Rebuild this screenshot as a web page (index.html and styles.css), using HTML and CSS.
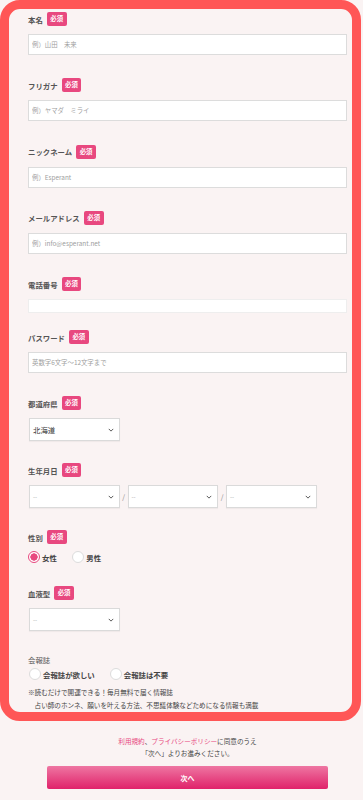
FILE: index.html
```html
<!DOCTYPE html>
<html lang="ja">
<head>
    <meta charset="UTF-8" />
    <meta name="viewport" content="width=device-width, initial-scale=1.0"/>
    <title>会員登録</title>
    <link rel="stylesheet" href="styles.css">
</head>
<body>
    <div class="form-frame">
        <form class="entry-form">
            <!-- 本名 -->
            <div class="field">
                <div class="field-label">本名<span class="badge">必須</span></div>
                <input class="text-input" type="text" placeholder="例）山田　未来" />
            </div>

            <!-- フリガナ -->
            <div class="field">
                <div class="field-label">フリガナ<span class="badge">必須</span></div>
                <input class="text-input" type="text" placeholder="例）ヤマダ　ミライ" />
            </div>

            <!-- ニックネーム -->
            <div class="field">
                <div class="field-label">ニックネーム<span class="badge">必須</span></div>
                <input class="text-input" type="text" placeholder="例）Esperant" />
            </div>

            <!-- メールアドレス -->
            <div class="field">
                <div class="field-label">メールアドレス<span class="badge">必須</span></div>
                <input class="text-input" type="email" placeholder="例）info@esperant.net" />
            </div>

            <!-- 電話番号 -->
            <div class="field field-tel">
                <div class="field-label">電話番号<span class="badge">必須</span></div>
                <input class="text-input tel-input" type="tel" />
            </div>

            <!-- パスワード -->
            <div class="field">
                <div class="field-label">パスワード<span class="badge">必須</span></div>
                <input class="text-input" type="password" placeholder="英数字6文字～12文字まで" />
            </div>

            <!-- 都道府県 -->
            <div class="field field-select">
                <div class="field-label">都道府県<span class="badge">必須</span></div>
                <div class="select-box">
                    <span class="select-value">北海道</span>
                    <svg class="chevron" viewBox="0 0 8 5"><path d="M1 1l3 3 3-3" /></svg>
                </div>
            </div>

            <!-- 生年月日 -->
            <div class="field field-select">
                <div class="field-label">生年月日<span class="badge">必須</span></div>
                <div class="birth-row">
                    <div class="select-box">
                        <span class="select-value empty">--</span>
                        <svg class="chevron" viewBox="0 0 8 5"><path d="M1 1l3 3 3-3" /></svg>
                    </div>
                    <span class="slash">/</span>
                    <div class="select-box">
                        <span class="select-value empty">--</span>
                        <svg class="chevron" viewBox="0 0 8 5"><path d="M1 1l3 3 3-3" /></svg>
                    </div>
                    <span class="slash">/</span>
                    <div class="select-box">
                        <span class="select-value empty">--</span>
                        <svg class="chevron" viewBox="0 0 8 5"><path d="M1 1l3 3 3-3" /></svg>
                    </div>
                </div>
            </div>

            <!-- 性別 -->
            <div class="field field-radio">
                <div class="field-label">性別<span class="badge">必須</span></div>
                <div class="radio-row">
                    <label class="radio"><span class="radio-mark checked"></span>女性</label>
                    <label class="radio"><span class="radio-mark"></span>男性</label>
                </div>
            </div>

            <!-- 血液型 -->
            <div class="field field-blood">
                <div class="field-label">血液型<span class="badge">必須</span></div>
                <div class="select-box">
                    <span class="select-value empty">--</span>
                    <svg class="chevron" viewBox="0 0 8 5"><path d="M1 1l3 3 3-3" /></svg>
                </div>
            </div>

            <!-- 会報誌 -->
            <div class="field field-magazine">
                <div class="field-label plain">会報誌</div>
                <div class="radio-row">
                    <label class="radio"><span class="radio-mark"></span>会報誌が欲しい</label>
                    <label class="radio"><span class="radio-mark"></span>会報誌は不要</label>
                </div>
                <p class="note">※読むだけで開運できる！毎月無料で届く情報誌<br>　占い師のホンネ、願いを叶える方法、不思議体験などためになる情報も満載</p>
            </div>
        </form>
    </div>

    <div class="agree">
        <p class="agree-text"><a href="#">利用規約</a>、<a href="#">プライバシーポリシー</a>に同意のうえ<br>「次へ」よりお進みください。</p>
        <button class="next-button" type="button">次へ</button>
    </div>
</body>
</html>
```

FILE: styles.css
```css
body {
    margin: 0;
    padding: 0;
    font-family: "Noto Sans CJK JP", "Noto Sans", sans-serif;
    background-color: #faf3f3;
    color: #555;
}

.form-frame {
    width: 361px;
    box-sizing: border-box;
    border: 9px solid #ff5656;
    border-radius: 20px;
    background-color: #faf3f3;
}

.entry-form {
    padding: 3px 5px 1px 19px;
}

.field {
    margin-bottom: 23.3px;
}

.field-label {
    display: flex;
    align-items: center;
    gap: 4px;
    height: 14px;
    margin-bottom: 8px;
    font-size: 7.4px;
    font-weight: bold;
    color: #555;
}

.badge {
    display: inline-block;
    height: 14px;
    line-height: 14px;
    padding: 0 3.5px;
    border-radius: 2px;
    background-color: #e8487f;
    color: #fff;
    font-size: 6.4px;
    font-weight: bold;
}

.text-input {
    display: block;
    width: 319px;
    height: 21px;
    box-sizing: border-box;
    margin: 0;
    padding: 0 3px;
    border: 1px solid #dcdcdc;
    border-radius: 0;
    background-color: #fff;
    font-family: inherit;
    font-size: 6.4px;
    color: #333;
    outline: none;
}

.text-input::placeholder {
    color: #a0a0a0;
}

.field-tel {
    margin-bottom: 17px;
}

.tel-input {
    height: 14px;
    border-color: #eeeeee;
}

.field-select {
    margin-bottom: 22px;
}

.select-box {
    position: relative;
    display: flex;
    align-items: center;
    width: 90.5px;
    height: 23px;
    box-sizing: border-box;
    margin-left: 1px;
    padding: 0 3px;
    border: 1px solid #dadada;
    background-color: #fff;
    box-shadow: 0 1px 1px rgba(0, 0, 0, 0.04);
}

.select-value {
    font-size: 7.4px;
    color: #333;
}

.select-value.empty {
    color: #aaa;
    font-size: 6px;
}

.chevron {
    position: absolute;
    right: 5px;
    top: 9px;
    width: 6px;
    height: 4px;
    fill: none;
    stroke: #555;
    stroke-width: 1.3;
}

.birth-row {
    display: flex;
    align-items: center;
}

.birth-row .select-box {
    margin-left: 0;
}

.birth-row .select-box:first-child {
    margin-left: 1px;
}

.slash {
    width: 8px;
    text-align: center;
    font-size: 7px;
    color: #888;
}

.field-radio .field-label {
    margin-bottom: 7px;
}

.field-radio {
    margin-bottom: 23px;
}

.field-blood {
    margin-bottom: 21px;
}

.radio-row {
    display: flex;
    align-items: center;
    gap: 15.5px;
}

.radio {
    display: flex;
    align-items: center;
    gap: 2px;
    font-size: 7.4px;
    font-weight: bold;
    color: #444;
}

.radio-mark {
    width: 12px;
    height: 12px;
    box-sizing: border-box;
    border: 1px solid #dcdcdc;
    border-radius: 50%;
    background-color: #fff;
}

.radio-mark.checked {
    border-color: #e8487f;
    background: radial-gradient(circle, #e8487f 0 3.4px, #fff 3.9px);
}

.field-magazine {
    margin-bottom: 0;
}

.field-magazine .field-label {
    margin-bottom: 2px;
    font-weight: normal;
}

.field-magazine .radio-row {
    gap: 15px;
    margin-left: 1px;
}

.note {
    margin: 6px 0 0 0;
    font-size: 6.6px;
    line-height: 12.3px;
    color: #444;
}

.agree {
    padding: 14px 0 0 12px;
    text-align: center;
}

.agree-text {
    margin: 0;
    font-size: 6.6px;
    line-height: 12px;
    color: #444;
}

.agree-text a {
    color: #e8487f;
    text-decoration: none;
}

.next-button {
    display: block;
    width: 281px;
    height: 23px;
    margin: 7px 0 0 35px;
    border: none;
    border-radius: 2px;
    background: linear-gradient(to bottom, #ee76a2, #e0226a);
    color: #fff;
    font-family: inherit;
    font-size: 7px;
    font-weight: bold;
    cursor: pointer;
}
```
